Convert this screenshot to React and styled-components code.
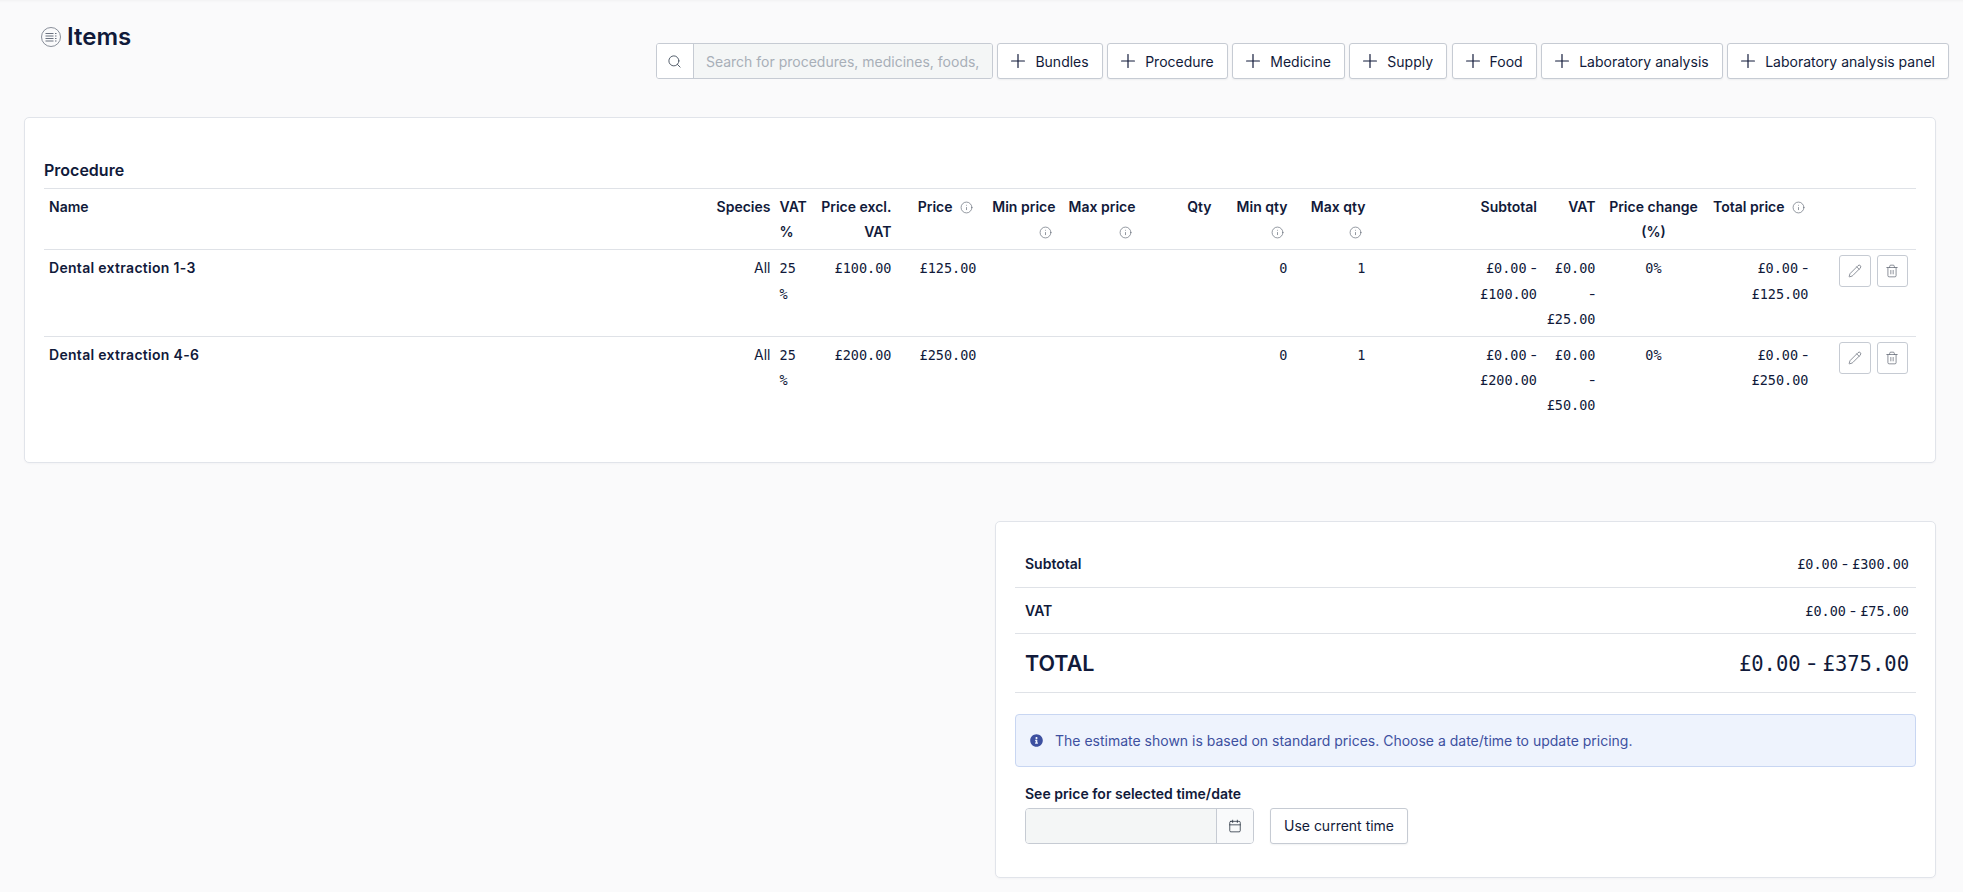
import React from "react";
import styled, { createGlobalStyle } from "styled-components";
import { Search, Plus, Info, Pencil, Trash2, Calendar } from "lucide-react";
import { FaInfoCircle } from "react-icons/fa";

const GlobalStyle = createGlobalStyle`
  html, body {
    margin: 0;
    background: #fafafb;
  }
  body {
    font-family: Inter, "Liberation Sans", sans-serif;
    font-size: 14px;
    color: #111a3a;
  }
  * {
    box-sizing: border-box;
  }
`;

const Page = styled.div`
  min-height: 892px;
  padding: 0 27px 15px 24px;
  box-shadow: inset 0 3px 3px -2px rgba(0, 0, 0, 0.04);
`;

const Header = styled.header`
  display: flex;
  justify-content: space-between;
  align-items: flex-start;
  height: 117px;
  padding: 22px 0 0 17px;
  margin-right: -13px;
`;

const TitleWrap = styled.div`
  display: flex;
  align-items: center;
  gap: 6px;
`;

const Title = styled.h1`
  margin: 0;
  font-size: 24px;
  line-height: 29px;
  font-weight: 600;
`;

const Toolbar = styled.div`
  display: flex;
  gap: 4.5px;
  margin-top: 21px;
`;

const SearchGroup = styled.div`
  display: flex;
  width: 337px;
  height: 36px;
  border: 1px solid #c6cbd3;
  border-radius: 3px;
  overflow: hidden;
`;

const SearchIcon = styled.span`
  display: flex;
  align-items: center;
  justify-content: center;
  width: 37px;
  flex: none;
  background: #fff;
  border-right: 1px solid #c6cbd3;
  color: #4b5563;
`;

const SearchInput = styled.input`
  flex: 1;
  min-width: 0;
  border: 0;
  outline: 0;
  padding: 0 12px;
  background: #f4f6f6;
  font: inherit;
  color: inherit;

  &::placeholder {
    color: #a8afb8;
    opacity: 1;
  }
`;

const AddButton = styled.button`
  display: flex;
  align-items: center;
  gap: 6px;
  height: 36px;
  padding: 0 13px 0 9px;
  background: #fff;
  border: 1px solid #c6cbd3;
  border-radius: 3px;
  box-shadow: 0 1px 2px rgba(17, 26, 58, 0.06);
  font: inherit;
  color: inherit;
  white-space: nowrap;
`;

const Card = styled.section`
  background: #fff;
  border: 1px solid #e1e4ea;
  border-radius: 5px;
  box-shadow: 0 1px 2px rgba(17, 26, 58, 0.03);
`;

const ItemsCard = styled(Card)`
  padding: 39px 19px 39px;
`;

const SectionTitle = styled.h2`
  margin: 0;
  height: 31px;
  font-size: 16px;
  line-height: 26px;
  font-weight: 600;
`;

const columns =
  "666.5px 65px 37px 84px 85px 79px 80px 76px 76px 78px 100px 71.5px 58.5px 106px 107px 104px";

const Row = styled.div`
  display: grid;
  grid-template-columns: ${columns};
  border-top: 1px solid #dfe2e7;
  padding: 5px 0 5px;
  line-height: 25.2px;
`;

const HeadCell = styled.div`
  padding: 0 5px 0 ${(p) => (p.$tight ? "4px" : "5px")};
  font-weight: 600;
  text-align: ${(p) => p.$align || "right"};
`;

const Cell = styled.div`
  padding: 0 5px 0 ${(p) => (p.$tight ? "4px" : "5px")};
  text-align: ${(p) => p.$align || "right"};
  font-weight: ${(p) => (p.$bold ? 600 : 400)};
  letter-spacing: ${(p) => (p.$bold ? "0.3px" : "normal")};
`;

const Mono = styled.span`
  font-family: "DejaVu Sans Mono", "Liberation Mono", monospace;
  font-size: ${(p) => p.$size || 13.5}px;
  line-height: 1;
`;

const Hint = styled(Info)`
  display: inline-block;
  vertical-align: -2px;
  margin: 0 4px 0 7px;
  color: #5b6370;
`;

const Actions = styled.div`
  display: flex;
  justify-content: flex-end;
  align-items: flex-start;
  gap: 6px;
  padding-right: 9.5px;
`;

const IconButton = styled.button`
  display: flex;
  align-items: center;
  justify-content: center;
  width: 31.5px;
  height: 32px;
  padding: 0;
  background: #fff;
  border: 1px solid #c6cbd3;
  border-radius: 3px;
  color: #5b6370;
`;

const SummaryCard = styled(Card)`
  width: 941px;
  margin: 58px 0 0 auto;
  padding: 19px 19px 33px;
`;

const SummaryRow = styled.div`
  display: flex;
  justify-content: space-between;
  align-items: center;
  height: ${(p) => p.$height}px;
  padding: 0 7px 0 10px;
  border-bottom: 1px solid #dfe2e7;
  font-weight: 600;
  font-size: ${(p) => (p.$large ? 21.5 : 14)}px;
`;

const SummaryValue = styled.span`
  font-weight: 400;
`;

const Notice = styled.div`
  display: flex;
  align-items: center;
  gap: 12px;
  height: 53px;
  margin-top: 21px;
  padding: 0 14px;
  background: #eef3fd;
  border: 1px solid #c8d6f2;
  border-radius: 4px;
  color: #3d50a0;
`;

const FieldLabel = styled.div`
  margin: 18px 0 6px 10px;
  font-weight: 600;
  line-height: 17px;
`;

const TimeRow = styled.div`
  display: flex;
  gap: 16px;
  margin-left: 10px;
`;

const DateGroup = styled.div`
  display: flex;
  width: 229px;
  height: 36px;
  border: 1px solid #c6cbd3;
  border-radius: 4px;
  overflow: hidden;
`;

const DateInput = styled.input`
  flex: 1;
  min-width: 0;
  border: 0;
  outline: 0;
  background: #f4f6f6;
`;

const DateIcon = styled.span`
  display: flex;
  align-items: center;
  justify-content: center;
  width: 37px;
  flex: none;
  background: #f9fafb;
  border-left: 1px solid #c6cbd3;
  color: #1f2937;
`;

const TimeButton = styled.button`
  width: 138px;
  height: 36px;
  padding: 0;
  background: #fff;
  border: 1px solid #c6cbd3;
  border-radius: 3px;
  box-shadow: 0 1px 2px rgba(17, 26, 58, 0.06);
  font: inherit;
  color: inherit;
`;

const addLabels = [
  "Bundles",
  "Procedure",
  "Medicine",
  "Supply",
  "Food",
  "Laboratory analysis",
  "Laboratory analysis panel",
];

const procedures = [
  {
    name: "Dental extraction 1-3",
    excl: "£100.00",
    price: "£125.00",
    subtotal: "£100.00",
    vat: "£25.00",
    total: "£125.00",
  },
  {
    name: "Dental extraction 4-6",
    excl: "£200.00",
    price: "£250.00",
    subtotal: "£200.00",
    vat: "£50.00",
    total: "£250.00",
  },
];

function ListIcon() {
  return (
    <svg width="20" height="20" viewBox="0 0 20 20" fill="none" stroke="#6b7280">
      <circle cx="10" cy="10" r="9.5" strokeWidth="0.8" />
      <path d="M4.5 6.5h8M4.5 9h8M4.5 11.5h8M4.5 14h8" strokeWidth="1.1" />
      <path d="M14 6.5h1.5M14 9h1.5M14 11.5h1.5M14 14h1.5" strokeWidth="1.1" />
    </svg>
  );
}

function Range({ to, size }) {
  return (
    <>
      <Mono $size={size}>£0.00</Mono> - <Mono $size={size}>{to}</Mono>
    </>
  );
}

function App() {
  return (
    <Page>
      <GlobalStyle />
      <Header>
        <TitleWrap>
          <ListIcon />
          <Title>Items</Title>
        </TitleWrap>
        <Toolbar>
          <SearchGroup>
            <SearchIcon>
              <Search size={15} strokeWidth={1.5} />
            </SearchIcon>
            <SearchInput placeholder="Search for procedures, medicines, foods, supplies" />
          </SearchGroup>
          {addLabels.map((label) => (
            <AddButton key={label}>
              <Plus size={22} strokeWidth={1.3} />
              {label}
            </AddButton>
          ))}
        </Toolbar>
      </Header>

      <ItemsCard>
        <SectionTitle>Procedure</SectionTitle>
        <Row>
          <HeadCell $align="left">Name</HeadCell>
          <HeadCell>Species</HeadCell>
          <HeadCell $align="left" $tight>VAT %</HeadCell>
          <HeadCell>Price excl. VAT</HeadCell>
          <HeadCell>Price<Hint size={13} strokeWidth={1.2} /></HeadCell>
          <HeadCell>Min price<Hint size={13} strokeWidth={1.2} /></HeadCell>
          <HeadCell>Max price<Hint size={13} strokeWidth={1.2} /></HeadCell>
          <HeadCell>Qty</HeadCell>
          <HeadCell>Min qty<Hint size={13} strokeWidth={1.2} /></HeadCell>
          <HeadCell>Max qty<Hint size={13} strokeWidth={1.2} /></HeadCell>
          <HeadCell />
          <HeadCell>Subtotal</HeadCell>
          <HeadCell $tight>VAT</HeadCell>
          <HeadCell $align="center">Price change (%)</HeadCell>
          <HeadCell>Total price<Hint size={13} strokeWidth={1.2} /></HeadCell>
          <HeadCell />
        </Row>
        {procedures.map((item) => (
          <Row key={item.name}>
            <Cell $align="left" $bold>{item.name}</Cell>
            <Cell>All</Cell>
            <Cell $align="left" $tight><Mono>25 %</Mono></Cell>
            <Cell><Mono>{item.excl}</Mono></Cell>
            <Cell><Mono>{item.price}</Mono></Cell>
            <Cell />
            <Cell />
            <Cell />
            <Cell><Mono>0</Mono></Cell>
            <Cell><Mono>1</Mono></Cell>
            <Cell />
            <Cell><Range to={item.subtotal} /></Cell>
            <Cell $tight><Range to={item.vat} /></Cell>
            <Cell $align="center"><Mono>0%</Mono></Cell>
            <Cell><Range to={item.total} /></Cell>
            <Actions>
              <IconButton><Pencil size={14} strokeWidth={1.2} /></IconButton>
              <IconButton><Trash2 size={14} strokeWidth={1.2} /></IconButton>
            </Actions>
          </Row>
        ))}
      </ItemsCard>

      <SummaryCard>
        <SummaryRow $height={47}>
          Subtotal
          <SummaryValue><Range to="£300.00" /></SummaryValue>
        </SummaryRow>
        <SummaryRow $height={46}>
          VAT
          <SummaryValue><Range to="£75.00" /></SummaryValue>
        </SummaryRow>
        <SummaryRow $height={59} $large>
          TOTAL
          <SummaryValue><Range to="£375.00" size={20.5} /></SummaryValue>
        </SummaryRow>
        <Notice>
          <FaInfoCircle size={13} />
          The estimate shown is based on standard prices. Choose a date/time to update pricing.
        </Notice>
        <FieldLabel>See price for selected time/date</FieldLabel>
        <TimeRow>
          <DateGroup>
            <DateInput />
            <DateIcon>
              <Calendar size={14} strokeWidth={1.3} />
            </DateIcon>
          </DateGroup>
          <TimeButton>Use current time</TimeButton>
        </TimeRow>
      </SummaryCard>
    </Page>
  );
}

export default App;
